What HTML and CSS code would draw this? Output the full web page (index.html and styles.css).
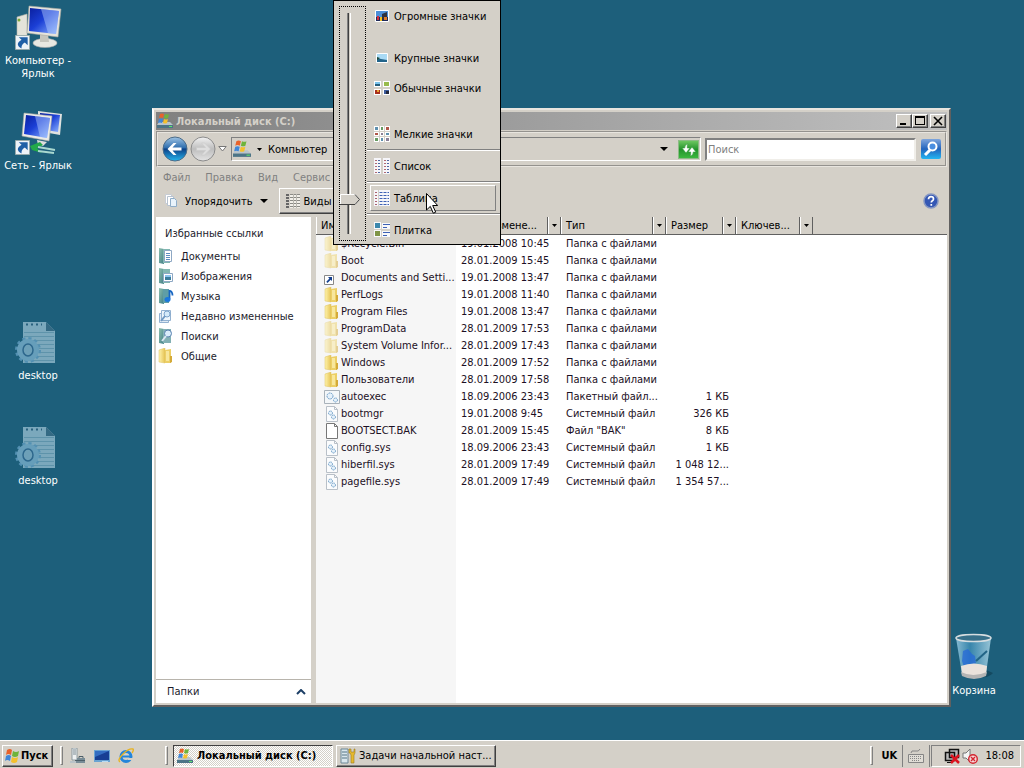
FILE: index.html
```html
<!DOCTYPE html>
<html lang="ru">
<head>
  <meta charset="UTF-8" />
  <meta name="viewport" content="width=device-width, initial-scale=1.0" />
  <title>Локальный диск (C:)</title>
  <link rel="stylesheet" href="styles.css">
</head>
<body>
  <!-- Shared icons -->
  <svg class="sprite" aria-hidden="true">
    <defs>
      <linearGradient id="gScreen" x1="0" y1="0" x2="1" y2="1">
        <stop offset="0" stop-color="#0a1f9e" /><stop offset=".45" stop-color="#1b3fd6" /><stop offset="1" stop-color="#8fb6ff" />
      </linearGradient>
      <linearGradient id="gFolder" x1="0" y1="0" x2="1" y2="0">
        <stop offset="0" stop-color="#fff3ac" /><stop offset="1" stop-color="#e6c455" />
      </linearGradient>
      <linearGradient id="gTeal" x1="0" y1="0" x2="1" y2="1">
        <stop offset="0" stop-color="#8fc0ae" /><stop offset="1" stop-color="#3e7d86" />
      </linearGradient>
      <linearGradient id="gBack" x1="0" y1="0" x2="0" y2="1">
        <stop offset="0" stop-color="#9fc4e4" /><stop offset=".45" stop-color="#2f6eae" /><stop offset=".5" stop-color="#0d4187" /><stop offset="1" stop-color="#25b6ee" />
      </linearGradient>
      <linearGradient id="gForward" x1="0" y1="0" x2="0" y2="1">
        <stop offset="0" stop-color="#f2f2f2" /><stop offset=".5" stop-color="#bdbdbd" /><stop offset="1" stop-color="#e4e4e4" />
      </linearGradient>
      <linearGradient id="gBin" x1="0" y1="0" x2="1" y2="0">
        <stop offset="0" stop-color="#9fd0e6" stop-opacity=".8" /><stop offset=".4" stop-color="#3e8fb8" stop-opacity=".8" /><stop offset="1" stop-color="#b4dcec" stop-opacity=".8" />
      </linearGradient>
    </defs>
    <symbol id="flag" viewBox="0 0 16 16">
      <path d="M3 2q3-2 5 0l-1 5q-3-2-5 0z" fill="#e8622a" />
      <path d="M9 3q3 2 6 0l-1 5q-3 2-6 0z" fill="#6fb43a" />
      <path d="M2 8q3-2 5 0l-1 5q-3-2-5 0z" fill="#3f86d8" />
      <path d="M8 9q3 2 6 0l-1 5q-3 2-6 0z" fill="#f5c02c" />
    </symbol>
    <symbol id="disk" viewBox="0 0 16 16">
      <path d="M2 9h11l3 3H0z" fill="#b8c4cc" />
      <path d="M0 12h16v3H0z" fill="#4c7486" />
      <path d="M12 13h3v1h-3z" fill="#5be36a" />
      <path d="M3 1q2-1 4 0l-1 4q-2-1-4 0z" fill="#e8622a" />
      <path d="M8 1q2 1 4 0l-1 4q-2 1-4 0z" fill="#6fb43a" />
      <path d="M2 6q2-1 4 0l-1 4q-2-1-4 0z" fill="#3f86d8" />
      <path d="M7 6q2 1 4 0l-1 4q-2 1-4 0z" fill="#f5c02c" />
    </symbol>
    <symbol id="folder" viewBox="0 0 16 16">
      <path d="M1 2l6-2v15l-6-1z" fill="url(#gFolder)" stroke="#dcc05c" stroke-width=".5" />
      <path d="M7 2l6-1v14H7z" fill="#eccf66" />
      <path d="M8 3h3v10H8z" fill="#f8e79c" />
      <path d="M12 8h2v6l-2 1z" fill="#d4aa38" />
    </symbol>
    <symbol id="shortcut" viewBox="0 0 16 16">
      <path d="M.5 5.500h9v9h-9z" fill="#fff" stroke="#888" />
      <path d="M4 7h4v4L6.700 9.700 3.500 13 2.300 11.800 5.400 8.400z" fill="#14408f" />
    </symbol>
    <symbol id="arrow-badge" viewBox="0 0 16 16">
      <path d="M.5.500h15v15H.5z" fill="#eef3f8" stroke="#9aa" />
      <path d="M4 2.500h9.500V11l-3-3q-4 2-3.500 6.500Q-1 10 7 5z" fill="#1f5fa6" />
    </symbol>
    <symbol id="sysfile" viewBox="0 0 16 16">
      <path d="M2.500.500h8l3 3v12h-11z" fill="#fbfcfd" stroke="#b9c0c8" />
      <path d="M10.500.500v3h3" fill="none" stroke="#b9c0c8" />
      <circle cx="6.500" cy="7" r="2" fill="#e6f1fa" stroke="#6c9cc6" stroke-dasharray="1.500 .6" />
      <circle cx="9.500" cy="11" r="2" fill="#e6f1fa" stroke="#6c9cc6" stroke-dasharray="1.500 .6" />
    </symbol>
    <symbol id="batfile" viewBox="0 0 16 16">
      <path d="M.5 1.500h15v13H.5z" fill="#f4f7f9" stroke="#a9b2ba" />
      <circle cx="6" cy="7" r="3" fill="#e6f1fa" stroke="#6c9cc6" stroke-dasharray="1.800 .7" />
      <circle cx="11.500" cy="11" r="2" fill="#e6f1fa" stroke="#6c9cc6" stroke-dasharray="1.500 .6" />
    </symbol>
    <symbol id="blank" viewBox="0 0 16 16">
      <path d="M2.500.500h8l3 3v12h-11z" fill="#fff" stroke="#777" />
      <path d="M10.500.500v3h3" fill="none" stroke="#777" />
    </symbol>
    <symbol id="gear-page" viewBox="0 0 48 48">
      <g opacity=".7">
        <path d="M9 4h23l9 9v32H9z" fill="#a4c8d8" />
        <path d="M32 4v9h9z" fill="#3f7088" />
        <path d="M12 6.500h16" stroke="#2e6280" stroke-width="2" stroke-dasharray="2 3" />
        <path d="M10 14.500h30M10 18.500h30M10 22.500h30M10 26.500h30M10 30.500h30M10 34.500h30M10 38.500h30M10 42.500h30" stroke="#7aa9be" />
        <circle cx="14" cy="32" r="11" fill="none" stroke="#6aa6ca" stroke-width="4" stroke-dasharray="3 2.760" />
        <circle cx="14" cy="32" r="8" fill="none" stroke="#86b9d6" stroke-width="6" />
        <ellipse cx="14" cy="32" rx="5" ry="6" fill="#8fbcd2" stroke="#346b94" stroke-width="1.500" />
      </g>
    </symbol>
    <symbol id="caret" viewBox="0 0 8 4"><path d="M0 0h8L4 4z" /></symbol>
    <symbol id="caret-small" viewBox="0 0 5 3"><path d="M0 0h5L2.500 3z" /></symbol>
  </svg>

  <main class="desktop">
    <div class="shortcuts">
      <div class="shortcut">
        <svg viewBox="0 0 48 48">
          <path d="M3 14l10-3v30l-10-3z" fill="#e4e3da" stroke="#b5b5aa" stroke-width=".6" />
          <circle cx="5" cy="17" r="1.500" fill="#7da83a" />
          <ellipse cx="31" cy="40" rx="12" ry="4.500" fill="#e8e8e2" stroke="#aaa" stroke-width=".6" />
          <path d="M26 30l8 1 1 8h-9z" fill="#c6c6be" />
          <path d="M15 3l32 3-3 28-31-4z" fill="#e6e4dc" stroke="#aaa89e" stroke-width=".6" />
          <path d="M16 5l29 3-3 23-27-3z" fill="url(#gScreen)" />
          <path d="M27 6l18 2-3 23-8-1z" fill="#b8d0ff" opacity=".45" />
          <use href="#arrow-badge" x="1" y="32" width="15" height="15" />
        </svg>
        <span>Компьютер - Ярлык</span>
      </div>
      <div class="shortcut">
        <svg viewBox="0 0 48 48">
          <path d="M24 3l24 3-2 21-22-4z" fill="#e0e2e0" />
          <path d="M26 5l20 2-2 17-18-3z" fill="url(#gScreen)" />
          <path d="M10 5l28 3-3 25-27-5z" fill="#ecebe6" stroke="#a9a9a4" stroke-width=".6" />
          <path d="M12 7l24 3-3 20-23-4z" fill="url(#gScreen)" />
          <path d="M21 8l15 2-3 20-7-1z" fill="#b8d0ff" opacity=".45" />
          <path d="M23 32l10 2-4 4-5-1z" fill="#ddd" />
          <path d="M16 38l10-4 3 3-6 3 5 5-10-3z" fill="#22a94a" />
          <path d="M24 39l17 3M24 43l16 2" stroke="#a9d8d0" stroke-width="2" />
          <use href="#arrow-badge" x="1" y="32" width="15" height="15" />
        </svg>
        <span>Сеть - Ярлык</span>
      </div>
      <div class="shortcut row-4">
        <svg><use href="#gear-page" /></svg>
        <span>desktop</span>
      </div>
      <div class="shortcut row-5">
        <svg><use href="#gear-page" /></svg>
        <span>desktop</span>
      </div>
    </div>

    <div class="shortcut recycle-bin">
      <svg viewBox="0 0 48 48">
        <path d="M34 36l9 4q-4 5-12 4z" fill="#144a61" />
        <path d="M6 5h35l-5 36q-12 7-24 0z" fill="url(#gBin)" />
        <path d="M13 18l5-2 4 5 3 2 1 7-5 3-7 1-2-6z" fill="#2668d8" opacity=".75" />
        <path d="M37 18l-11 10" stroke="#226486" stroke-width="2" />
        <path d="M11 33q13-5 26 0l-1 8q-12 6-24 0z" fill="#eae2dc" />
        <path d="M11 39q12 6 26 0l-1 4q-12 6-24 0z" fill="#b4b4b4" />
        <ellipse cx="23.500" cy="5" rx="17.500" ry="3.500" fill="#376f89" stroke="#d6dde0" stroke-width="1.500" />
      </svg>
      <span>Корзина</span>
    </div>

    <section class="window">
      <header class="title-bar">
        <svg class="icon"><use href="#disk" /></svg>
        <h1>Локальный диск (C:)</h1>
        <div class="window-buttons">
          <button class="raised" aria-label="Свернуть"><svg viewBox="0 0 12 10"><path d="M2 7h6v2H2z" /></svg></button>
          <button class="raised" aria-label="Развернуть"><svg viewBox="0 0 12 10"><path d="M1 0h10v9H1zm1 2v6h8V2z" fill-rule="evenodd" /></svg></button>
          <button class="raised close" aria-label="Закрыть"><svg viewBox="0 0 12 10"><path d="M2 1l8 8M10 1L2 9" stroke="#000" stroke-width="1.600" /></svg></button>
        </div>
      </header>

      <nav class="nav-bar">
        <button class="round" aria-label="Назад">
          <svg viewBox="0 0 26 26"><circle cx="13" cy="13" r="12" fill="url(#gBack)" stroke="#4c6c88" /><path d="M5.500 13l6-6h3l-4 4.500h9v3h-9l4 4.500h-3z" fill="#fff" /></svg>
        </button>
        <button class="round" aria-label="Вперед">
          <svg viewBox="0 0 26 26"><circle cx="13" cy="13" r="12" fill="url(#gForward)" stroke="#8b8b8b" /><path d="M20.500 13l-6-6h-3l4 4.500h-9v3h9l-4 4.500h3z" fill="#dedede" stroke="#c9c9c9" stroke-width=".6" /></svg>
        </button>
        <button class="history" aria-label="Последние страницы"><svg viewBox="0 0 9 6"><path d="M.8.500h7.400L4.500 5z" fill="#fff" stroke="#777" /></svg></button>
        <div class="address">
          <svg class="disk-icon"><use href="#disk" /></svg>
          <svg class="caret-small"><use href="#caret-small" /></svg>
          <a href="#">Компьютер</a>
          <svg class="caret-small"><use href="#caret-small" /></svg>
          <svg class="caret address-caret"><use href="#caret" /></svg>
          <button class="refresh" aria-label="Обновить">
            <svg viewBox="0 0 16 14"><path d="M7 1Q3.500 1.500 3.700 5H1l4 5 4-5H6.300Q6 3 7 1zM9 13q3.500-.5 3.300-4H15l-4-5-4 5h2.700q.3 2-.7 4z" fill="#fff" stroke="#2f9a38" stroke-width=".6" /></svg>
          </button>
        </div>
        <input class="search" type="text" placeholder="Поиск" aria-label="Поиск" />
        <button class="search-button" aria-label="Найти">
          <svg viewBox="0 0 20 20"><path d="M9 11l-5 5" stroke="#fff" stroke-width="3" /><circle cx="11.500" cy="7.500" r="4" fill="#4a8ee0" stroke="#fff" stroke-width="2" /></svg>
        </button>
      </nav>

      <div class="menu-bar">
        <button>Файл</button>
        <button>Правка</button>
        <button>Вид</button>
        <button>Сервис</button>
      </div>

      <div class="toolbar">
        <button class="organize">
          <svg class="icon" viewBox="0 0 16 16">
            <path d="M1.500 1.500h6v9h-6z" fill="#fff" stroke="#c7ccd4" />
            <path d="M3.500 3.500h6v9h-6z" fill="#fff" stroke="#b7c2d0" />
            <path d="M6.500 5.500h4l2 2v6h-6z" fill="#e9f3fb" stroke="#8fadc8" />
          </svg>
          Упорядочить
          <svg class="caret"><use href="#caret" /></svg>
        </button>
        <button class="views raised">
          <svg class="icon" viewBox="0 0 16 16">
            <path d="M1 1h3v2H1zM1 4h3v2H1zM1 7h3v2H1zM1 10h3v2H1zM1 13h3v2H1z" fill="#666" />
            <path d="M5 1h10v14H5z" fill="#f1efe9" />
            <path d="M5 1.500h10M5 4.500h10M5 7.500h10M5 10.500h10M5 13.500h10" stroke="#8b8b86" />
            <path d="M8.500 1v14M11.500 1v14" stroke="#b9b7b0" />
          </svg>
          Виды
          <svg class="caret"><use href="#caret" /></svg>
        </button>
        <button class="help" aria-label="Справка">
          <svg viewBox="0 0 16 16"><circle cx="8" cy="8" r="7" fill="#3457b4" stroke="#8496c2" stroke-width="1.500" /><path d="M5.500 6.200q0-2.500 2.500-2.500t2.500 2.300q0 1.200-1.400 2-.8.500-.8 1.600M8.300 11v1.700" fill="none" stroke="#fff" stroke-width="1.700" /></svg>
        </button>
      </div>

      <div class="content">
        <aside class="sidebar">
          <h2>Избранные ссылки</h2>
          <ul>
            <li><a href="#">
              <svg class="icon" viewBox="0 0 16 16"><path d="M1 0l5 1v15l-5-1z" fill="url(#gTeal)" /><path d="M5 1h7v14H5z" fill="#82b7b2" /><path d="M6.500 2.500h7v11h-7z" fill="#fff" stroke="#8ea8c4" /><path d="M8 5.500h4M8 7.500h4M8 9.500h4M8 11.500h4" stroke="#5c8cc0" /></svg>
              Документы</a></li>
            <li><a href="#">
              <svg class="icon" viewBox="0 0 16 16"><path d="M1 0l5 1v15l-5-1z" fill="url(#gTeal)" /><path d="M5 1h7v14H5z" fill="#82b7b2" /><path d="M5.500 5.500h9v8h-9z" fill="#fff" stroke="#8ea8c4" /><path d="M7 7h6v2H7z" fill="#8cc3ee" /><path d="M7 9h6v3H7z" fill="#3b7d9c" /></svg>
              Изображения</a></li>
            <li><a href="#">
              <svg class="icon" viewBox="0 0 16 16"><path d="M1 0l5 1v15l-5-1z" fill="url(#gTeal)" /><path d="M5 1h6v14H5z" fill="#5f9ea6" /><path d="M11.500 2v9M11.500 2.500q3 1 3 5" fill="none" stroke="#1766c2" stroke-width="1.800" /><ellipse cx="9.500" cy="11.500" rx="3" ry="2.500" fill="#1b78dc" /></svg>
              Музыка</a></li>
            <li><a href="#">
              <svg class="icon" viewBox="0 0 16 16"><path d="M1.500 5.500h9v9h-9z" fill="#dfeaf5" stroke="#93b1d0" /><path d="M3.500 2.500h9v10h-9z" fill="#edf5fc" stroke="#93b1d0" /><circle cx="9" cy="6" r="3" fill="#d5eafa" stroke="#7ba3cb" /><path d="M7 8l-4 5" stroke="#7098c2" stroke-width="2" /></svg>
              Недавно измененные</a></li>
            <li><a href="#">
              <svg class="icon" viewBox="0 0 16 16"><path d="M1 0l5 1v15l-5-1z" fill="url(#gTeal)" /><path d="M5 1h8v14H5z" fill="#82b0b4" /><circle cx="10" cy="5.500" r="3.500" fill="#d9ecfa" stroke="#5b83b2" /><path d="M8 8l-4 5" stroke="#dbe8f4" stroke-width="2" /></svg>
              Поиски</a></li>
            <li><a href="#"><svg class="icon"><use href="#folder" /></svg>Общие</a></li>
          </ul>
          <button class="folders">Папки
            <svg viewBox="0 0 10 6"><path d="M1 5l4-4 4 4" fill="none" stroke="#1d3f66" stroke-width="2" /></svg>
          </button>
        </aside>

        <div class="file-list">
          <table>
            <colgroup>
              <col class="col-name"><col class="col-date"><col class="col-type"><col class="col-size"><col class="col-keys"><col>
            </colgroup>
            <thead>
              <tr>
                <th><div class="head"><button class="head-label">Имя</button></div></th>
                <th><div class="head"><button class="head-label">Дата измене...</button><button class="head-drop" aria-label="Фильтр по дате"><svg class="caret-small"><use href="#caret-small" /></svg></button></div></th>
                <th><div class="head"><button class="head-label">Тип</button><button class="head-drop" aria-label="Фильтр по типу"><svg class="caret-small"><use href="#caret-small" /></svg></button></div></th>
                <th><div class="head"><button class="head-label">Размер</button><button class="head-drop" aria-label="Фильтр по размеру"><svg class="caret-small"><use href="#caret-small" /></svg></button></div></th>
                <th><div class="head"><button class="head-label">Ключев...</button><button class="head-drop" aria-label="Фильтр по ключевым словам"><svg class="caret-small"><use href="#caret-small" /></svg></button></div></th>
                <th></th>
              </tr>
            </thead>
            <tbody>
              <tr><td><div class="name hidden-file"><svg class="icon"><use href="#folder" /></svg>$Recycle.Bin</div></td><td>19.01.2008 10:45</td><td>Папка с файлами</td><td></td><td></td><td></td></tr>
              <tr><td><div class="name hidden-file"><svg class="icon"><use href="#folder" /></svg>Boot</div></td><td>28.01.2009 15:45</td><td>Папка с файлами</td><td></td><td></td><td></td></tr>
              <tr><td><div class="name"><svg class="icon"><use href="#shortcut" /></svg>Documents and Setti...</div></td><td>19.01.2008 13:47</td><td>Папка с файлами</td><td></td><td></td><td></td></tr>
              <tr><td><div class="name"><svg class="icon"><use href="#folder" /></svg>PerfLogs</div></td><td>19.01.2008 11:40</td><td>Папка с файлами</td><td></td><td></td><td></td></tr>
              <tr><td><div class="name"><svg class="icon"><use href="#folder" /></svg>Program Files</div></td><td>19.01.2008 13:47</td><td>Папка с файлами</td><td></td><td></td><td></td></tr>
              <tr><td><div class="name hidden-file"><svg class="icon"><use href="#folder" /></svg>ProgramData</div></td><td>28.01.2009 17:53</td><td>Папка с файлами</td><td></td><td></td><td></td></tr>
              <tr><td><div class="name hidden-file"><svg class="icon"><use href="#folder" /></svg>System Volume Infor...</div></td><td>28.01.2009 17:43</td><td>Папка с файлами</td><td></td><td></td><td></td></tr>
              <tr><td><div class="name"><svg class="icon"><use href="#folder" /></svg>Windows</div></td><td>28.01.2009 17:52</td><td>Папка с файлами</td><td></td><td></td><td></td></tr>
              <tr><td><div class="name"><svg class="icon"><use href="#folder" /></svg>Пользователи</div></td><td>28.01.2009 17:58</td><td>Папка с файлами</td><td></td><td></td><td></td></tr>
              <tr><td><div class="name"><svg class="icon"><use href="#batfile" /></svg>autoexec</div></td><td>18.09.2006 23:43</td><td>Пакетный файл...</td><td class="size">1 КБ</td><td></td><td></td></tr>
              <tr><td><div class="name"><svg class="icon"><use href="#sysfile" /></svg>bootmgr</div></td><td>19.01.2008 9:45</td><td>Системный файл</td><td class="size">326 КБ</td><td></td><td></td></tr>
              <tr><td><div class="name"><svg class="icon"><use href="#blank" /></svg>BOOTSECT.BAK</div></td><td>28.01.2009 15:45</td><td>Файл "BAK"</td><td class="size">8 КБ</td><td></td><td></td></tr>
              <tr><td><div class="name"><svg class="icon"><use href="#sysfile" /></svg>config.sys</div></td><td>18.09.2006 23:43</td><td>Системный файл</td><td class="size">1 КБ</td><td></td><td></td></tr>
              <tr><td><div class="name"><svg class="icon"><use href="#sysfile" /></svg>hiberfil.sys</div></td><td>28.01.2009 17:49</td><td>Системный файл</td><td class="size">1 048 12...</td><td></td><td></td></tr>
              <tr><td><div class="name"><svg class="icon"><use href="#sysfile" /></svg>pagefile.sys</div></td><td>28.01.2009 17:49</td><td>Системный файл</td><td class="size">1 354 57...</td><td></td><td></td></tr>
            </tbody>
          </table>
        </div>
      </div>
    </section>

    <!-- Views menu -->
    <div class="views-menu">
      <div class="slider-box">
        <input class="slider" type="range" min="0" max="100" value="86" aria-label="Размер значков" />
      </div>
      <div class="views-items">
        <button class="huge">
          <svg class="icon" viewBox="0 0 16 16"><path d="M1.500 2.500h13v11h-13z" fill="#4d8fd8" stroke="#fff" /><path d="M2 9h12v4H2z" fill="#202a58" /><path d="M8 6l5-2v7H8z" fill="#30323e" /><path d="M3 8h2v4H3z" fill="#d22c3e" /><path d="M6 9h2v4H6z" fill="#f0c020" /><path d="M10 9h3v3h-3z" fill="#e07a28" /></svg>
          Огромные значки</button>
        <button class="large">
          <svg class="icon" viewBox="0 0 16 16"><path d="M2.500 3.500h11v9h-11z" fill="#a9daf5" stroke="#fff" /><path d="M3 8l4 1 6 1v2H3z" fill="#22648a" /><path d="M3 7l3 1-3 2z" fill="#1d4b38" /></svg>
          Крупные значки</button>
        <button class="medium">
          <svg class="icon" viewBox="0 0 16 16"><path d="M0 1h7v6H0zM9 1h7v6H9zM0 9h7v6H0zM9 9h7v6H9z" fill="#fff" /><path d="M1 2h5v2H1z" fill="#7cc5ee" /><path d="M1 4h5v2H1z" fill="#27607e" /><path d="M10 2h5v4h-5z" fill="#98bb4c" /><path d="M1 10h5v4H1z" fill="#a82e1c" /><path d="M3 10h2v2H3z" fill="#eaa432" /><path d="M10 10h5v4h-5z" fill="#3d5c9c" /><path d="M12 11h3v3h-3z" fill="#22283c" /></svg>
          Обычные значки</button>
        <button class="small">
          <svg class="icon" viewBox="0 0 16 16"><path d="M0 0h5v5H0zM6 0h4v5H6zM11 0h5v5h-5zM0 6h5v4H0zM6 6h4v4H6zM11 6h5v4h-5zM0 11h5v5H0zM6 11h4v5H6zM11 11h5v5h-5z" fill="#fff" /><path d="M1 1h3v3H1zM12 7h3v2h-3zM7 12h2v3H7z" fill="#5e8fae" /><path d="M7 1h2v3H7zM1 12h3v3H1z" fill="#679b62" /><path d="M12 1h3v3h-3zM1 7h3v2H1z" fill="#b05648" /><path d="M7 7h2v2H7zM12 12h3v3h-3z" fill="#8b8096" /></svg>
          Мелкие значки</button>
        <hr>
        <button>
          <svg class="icon" viewBox="0 0 16 16"><path d="M0 0h7v16H0zM9 0h7v16H9z" fill="#f6f6fa" /><path d="M2 2v13M11 2v13" stroke="#b06a72" stroke-width="2" stroke-dasharray="1 2" /><path d="M5 2v13M14 2v13" stroke="#4f68a2" stroke-width="2" stroke-dasharray="1 2" /></svg>
          Список</button>
        <hr>
        <button class="selected">
          <svg class="icon" viewBox="0 0 16 16"><path d="M0 0h4v16H0zM5 0h11v16H5z" fill="#f6f6fa" /><path d="M2 2v13" stroke="#a9626e" stroke-width="2" stroke-dasharray="1 2" /><path d="M5.500 2.500H15M5.500 5.500H15M5.500 8.500H15M5.500 11.500H15M5.500 14.500H15" stroke="#3e61b4" stroke-dasharray="3 1" /></svg>
          Таблица</button>
        <hr>
        <button>
          <svg class="icon" viewBox="0 0 16 16"><path d="M0 0h7v7H0zM0 8h7v7H0zM8 1h8v6H8zM8 9h8v6H8z" fill="#f8f8fa" /><path d="M1 1h5v5H1z" fill="#3b87ac" /><path d="M1 9h5v5H1z" fill="#7f9446" /><path d="M9 2.500h7M9 10.500h7" stroke="#3e61b4" /><path d="M9 5.500h4M9 13.500h4" stroke="#3e61b4" /></svg>
          Плитка</button>
      </div>
    </div>
    <svg class="cursor" viewBox="0 0 12 21"><path d="M.5.500v16.500l3.800-3.600 3 6.800 2.400-1-3-6.700h5z" fill="#fff" stroke="#000" /></svg>
  </main>

  <footer class="taskbar">
    <button class="start raised"><svg class="icon"><use href="#flag" /></svg>Пуск</button>
    <span class="grip"></span>
    <div class="quick-launch">
      <svg class="icon" viewBox="0 0 16 16"><path d="M2 0h5v12H2z" fill="#eef1f2" stroke="#7a8a92" stroke-width=".8" /><path d="M3 2h3M3 4h3M3 6h3" stroke="#7a8a92" /><path d="M7 10h8v5H5v-3h2z" fill="#788c96" /><path d="M9 10V8.500h4V10M5 12.500h10" fill="none" stroke="#4c5f69" /><path d="M0 13h6v2H0z" fill="#b9c3c8" /></svg>
      <svg class="icon" viewBox="0 0 16 16"><path d="M0 2h16v12H0z" fill="#6aa3d2" /><path d="M1 3h14v9H1z" fill="#173f94" /><path d="M1 3h14L1 9z" fill="#336dc2" /><path d="M8 13h6v1H8z" fill="#b8dcf4" /></svg>
      <svg class="icon" viewBox="0 0 16 16"><circle cx="8" cy="8.500" r="5" fill="none" stroke="#2385da" stroke-width="3" /><path d="M4 8.500h9" stroke="#2385da" stroke-width="2" /><path d="M10 10h6v2h-6z" fill="#d4d0c8" /><path d="M2 14q-3-2 3-8T15 1q1 1-1 4" fill="none" stroke="#e8b321" stroke-width="1.400" /></svg>
    </div>
    <span class="grip"></span>
    <div class="tasks">
      <button class="task active"><svg class="icon"><use href="#disk" /></svg><span>Локальный диск (C:)</span></button>
      <button class="task raised">
        <svg class="icon" viewBox="0 0 16 16"><path d="M1 1h7v14H1z" fill="#d9e6ec" stroke="#6d8796" /><path d="M2 4h5M2 7h5M2 10h5" stroke="#557486" /><path d="M9 1v4h1l1 2v8h3V7l1-2V1h-1v3h-3V1z" fill="#e6b92e" stroke="#9a7d1f" stroke-width=".6" /></svg>
        <span>Задачи начальной наст...</span></button>
    </div>
    <span class="grip"></span>
    <strong class="language">UK</strong>
    <div class="keyboard">
      <svg class="icon" viewBox="0 0 16 16"><path d="M.5 6.500h15v8H.5z" fill="#e0ddd6" stroke="#858585" /><path d="M2 8.500h12M2 10.500h12M4 12.500h8" stroke="#858585" stroke-dasharray="1 1" /><path d="M3 5q0-3 4-2t5-2" fill="none" stroke="#858585" /></svg>
    </div>
    <div class="tray">
      <svg class="icon" viewBox="0 0 16 16"><path d="M5.500 1.500h9v8h-9zM1.500 4.500h9v8h-9z" fill="#b9b9b9" stroke="#111" stroke-width="1.500" /><path d="M3 14.500h6" stroke="#111" /><path d="M7 7l8 8M15 7l-8 8" stroke="#dc1420" stroke-width="2.500" /></svg>
      <svg class="icon" viewBox="0 0 16 16"><path d="M1 5h3l4-4v13l-4-4H1z" fill="#f4f4f4" stroke="#777" /><circle cx="11" cy="11" r="4.300" fill="#f6d9d9" stroke="#d32630" stroke-width="1.400" /><path d="M9 9l4 4M13 9l-4 4" stroke="#d32630" stroke-width="1.400" /></svg>
      <time>18:08</time>
    </div>
  </footer>
</body>
</html>
```

FILE: styles.css
```css
* {
  box-sizing: border-box;
}
body {
  margin: 0;
  min-height: 100vh;
  display: flex;
  flex-direction: column;
  overflow: hidden;
  background: #1d5f7b;
  color: #000;
  font-family: Tahoma, "DejaVu Sans Condensed", "DejaVu Sans", sans-serif;
  font-size: 11px;
  line-height: 13px;
}
button {
  margin: 0;
  padding: 0;
  border: 0;
  background: none;
  color: inherit;
  font: inherit;
  white-space: nowrap;
}
a {
  color: inherit;
  text-decoration: none;
}
svg {
  display: block;
  flex: none;
}
.sprite {
  position: absolute;
  width: 0;
  height: 0;
}
.icon {
  width: 16px;
  height: 16px;
}
.caret {
  width: 8px;
  height: 4px;
}
.caret-small {
  width: 5px;
  height: 3px;
}
.raised {
  background: #d4d0c8;
  border: 1px solid;
  border-color: #fff #404040 #404040 #fff;
  box-shadow: inset -1px -1px 0 #808080;
}

/* Desktop */
.desktop {
  position: relative;
  flex: 1;
}
.shortcuts {
  display: grid;
  grid-auto-rows: 105px;
  width: 76px;
  padding-top: 3px;
}
.row-4 {
  grid-row: 4;
}
.row-5 {
  grid-row: 5;
}
.shortcut {
  display: flex;
  flex-direction: column;
  align-items: center;
  gap: 3px;
  width: 76px;
  color: #fff;
  text-align: center;
}
.shortcut svg {
  width: 48px;
  height: 48px;
}
.recycle-bin {
  position: absolute;
  right: 12px;
  bottom: 43px;
}

/* Explorer window */
.window {
  position: absolute;
  top: 108px;
  left: 152px;
  right: 73px;
  bottom: 33px;
  display: flex;
  flex-direction: column;
  padding: 2px;
  background: #d4d0c8;
  border: 2px solid;
  border-color: #e8e5df #606060 #606060 #fff;
}
.title-bar {
  display: flex;
  align-items: center;
  gap: 3px;
  height: 18px;
  padding: 0 1px;
  background: linear-gradient(to right, #808080, #c0c0c0);
}
.title-bar h1 {
  flex: 1;
  margin: 0;
  color: #d4d0c8;
  font-size: 11px;
  font-weight: bold;
}
.window-buttons {
  display: flex;
}
.window-buttons button {
  width: 16px;
  height: 14px;
  padding: 1px;
}
.window-buttons svg {
  width: 12px;
  height: 10px;
}
.window-buttons .close {
  margin-left: 2px;
}

.nav-bar {
  display: flex;
  align-items: center;
  height: 36px;
  margin-top: 1px;
  padding: 0 4px;
  border: 2px groove #e8e5df;
}
.round {
  width: 26px;
  height: 26px;
  margin-right: 2px;
}
.history {
  margin-right: 4px;
}
.history svg {
  width: 9px;
  height: 6px;
}
.address {
  flex: 1;
  display: flex;
  align-items: center;
  gap: 6px;
  height: 24px;
  padding: 0 1px;
  border: 1px solid;
  border-color: #808080 #fff #fff #808080;
}
.disk-icon {
  width: 18px;
  height: 18px;
}
.address-caret {
  margin-left: auto;
}
.refresh {
  width: 21px;
  height: 19px;
  margin-left: 4px;
  padding: 2px;
  border: 1px solid #8dbb86;
  background: linear-gradient(#6cc660, #24932c 50%, #3cb83f);
}
.refresh svg {
  width: 16px;
  height: 14px;
}
.search {
  width: 211px;
  height: 23px;
  margin: 0 5px 0 4px;
  padding: 0 1px;
  border: 2px solid;
  border-color: #808080 #f0eee9 #f0eee9 #808080;
  background: #fff;
  font: inherit;
}
.search::placeholder {
  color: #808080;
}
.search-button {
  width: 20px;
  height: 20px;
  border-radius: 2px;
  background: linear-gradient(#7fa5dc, #2264bd 50%, #24b6f2);
}

.menu-bar {
  display: flex;
  gap: 15px;
  height: 20px;
  padding: 0 7px;
  color: #808080;
}
.toolbar {
  display: flex;
  align-items: center;
  height: 30px;
  padding: 0 8px 2px;
}
.toolbar button {
  display: flex;
  align-items: center;
}
.organize {
  gap: 7px;
  padding-right: 11px;
}
.organize .icon {
  margin-right: -2px;
}
.views {
  gap: 3px;
  height: 26px;
  padding: 0 5px;
}
.help {
  margin-left: auto;
}
.help svg {
  width: 16px;
  height: 16px;
}

.content {
  flex: 1;
  display: flex;
  gap: 5px;
}
.sidebar {
  display: flex;
  flex-direction: column;
  width: 155px;
  background: #fff;
  color: #1c1c2c;
}
.sidebar h2 {
  margin: 10px 9px 6px;
  font-size: 11px;
  font-weight: normal;
}
.sidebar ul {
  flex: 1;
  margin: 0;
  padding: 0;
  list-style: none;
}
.sidebar a {
  display: flex;
  align-items: center;
  gap: 7px;
  height: 20px;
  padding-left: 2px;
  white-space: nowrap;
}
.folders {
  display: flex;
  align-items: center;
  justify-content: space-between;
  height: 24px;
  padding: 0 5px 0 11px;
  border-top: 1px solid #b8b4ac;
}
.folders svg {
  width: 10px;
  height: 6px;
}

.file-list {
  flex: 1;
  min-width: 0;
  overflow: hidden;
  background: linear-gradient(to right, #f6f6f6 140px, #fff 140px);
}
.file-list table {
  width: 100%;
  table-layout: fixed;
  border-collapse: separate;
  border-spacing: 0;
}
.col-name { width: 140px; }
.col-date { width: 105px; }
.col-type { width: 105px; }
.col-size { width: 70px; }
.col-keys { width: 77px; }
.file-list th {
  height: 18px;
  padding: 0;
  background: #d4d0c8;
  border-bottom: 1px solid #606060;
  font-weight: normal;
}
.head {
  display: flex;
  height: 17px;
}
.head button {
  border-right: 1px solid #606060;
  border-left: 1px solid #fff;
}
.head-label {
  flex: 1;
  padding-left: 4px;
  text-align: left;
}
.head-drop {
  display: flex;
  align-items: center;
  justify-content: center;
  width: 13px;
}
.file-list td {
  height: 17px;
  padding: 0 0 0 5px;
  color: #1c1024;
  white-space: nowrap;
}
.file-list .size {
  padding: 0 7px 0 0;
  text-align: right;
}
.name {
  display: flex;
  align-items: center;
  gap: 1px;
  padding-left: 3px;
}
.hidden-file .icon {
  opacity: 0.5;
}

/* Views menu */
.views-menu {
  position: absolute;
  top: 0;
  left: 333px;
  display: flex;
  width: 168px;
  background: #d4d0c8;
  border: 1px solid #000;
}
.slider-box {
  width: 27px;
  margin: 5px 1px 3px 5px;
  border: 1px dotted #000;
}
.slider {
  display: block;
  width: 25px;
  height: 221px;
  margin: 6px 0;
  appearance: none;
  background: none;
  writing-mode: vertical-lr;
}
.slider::-webkit-slider-runnable-track {
  width: 4px;
  height: 100%;
  margin-right: 8px;
  background: linear-gradient(to right, #808080 1px, #404040 1px 2px, #d4d0c8 2px 3px, #fff 3px);
}
.slider::-webkit-slider-thumb {
  appearance: none;
  width: 20px;
  height: 11px;
  margin-left: -7px;
  background: url("data:image/svg+xml,%3Csvg xmlns='http://www.w3.org/2000/svg' viewBox='0 0 20 11'%3E%3Cpath d='M.5.500H15l4.500 5-4.500 5H.5z' fill='%23d4d0c8' stroke='%23fff'/%3E%3Cpath d='M15 .5l4.500 5-4.500 5H0' fill='none' stroke='%23404040'/%3E%3C/svg%3E");
}
.views-items {
  flex: 1;
  display: flex;
  flex-direction: column;
  padding: 2px 0 1px;
}
.views-items button {
  display: flex;
  align-items: center;
  gap: 4px;
  height: 26px;
  margin: 0 4px 0 3px;
  padding: 0 3px;
  border: 1px solid transparent;
}
.views-items .huge { margin-bottom: 16px; }
.views-items .large { margin-bottom: 4px; }
.views-items .medium { margin-bottom: 20px; }
.views-items .selected {
  border-color: #fff #808080 #808080 #fff;
}
.views-items hr {
  width: 100%;
  margin: 2px 0;
  border: 0;
  border-top: 1px solid #808080;
  border-bottom: 1px solid #fff;
}
.cursor {
  position: absolute;
  top: 193px;
  left: 426px;
  width: 12px;
  height: 21px;
}

/* Taskbar */
.taskbar {
  display: flex;
  align-items: center;
  height: 28px;
  padding: 2px 3px 0 2px;
  background: #d4d0c8;
  border-top: 1px solid #fff;
}
.start {
  display: flex;
  align-items: center;
  gap: 1px;
  width: 51px;
  height: 22px;
  padding-left: 1px;
  font-weight: bold;
}
.grip {
  width: 3px;
  height: 19px;
  margin: 0 5px 0 7px;
  border: 1px solid;
  border-color: #fff #808080 #808080 #fff;
}
.quick-launch {
  display: flex;
  gap: 8px;
  width: 90px;
  padding-left: 2px;
}
.tasks {
  flex: 1;
  display: flex;
  gap: 3px;
}
.task {
  display: flex;
  align-items: center;
  gap: 4px;
  width: 160px;
  height: 22px;
  padding: 0 3px;
}
.task span {
  overflow: hidden;
}
.task.active {
  border: 1px solid;
  border-color: #404040 #fff #fff #404040;
  background: repeating-conic-gradient(#fff 0 25%, #d4d0c8 0 50%) 0 0 / 2px 2px;
  font-weight: bold;
}
.task.raised {
  gap: 3px;
}
.language {
  margin-left: 3px;
  width: 21px;
}
.keyboard {
  display: flex;
  align-items: center;
  height: 22px;
  margin-right: 1px;
  padding: 0 5px;
  border-left: 1px solid #808080;
  border-right: 1px solid #808080;
}
.tray {
  display: flex;
  align-items: center;
  gap: 2px;
  height: 22px;
  padding: 0 6px 0 12px;
  border: 1px solid;
  border-color: #808080 #fff #fff #808080;
}
.tray time {
  margin-left: 5px;
}
```
